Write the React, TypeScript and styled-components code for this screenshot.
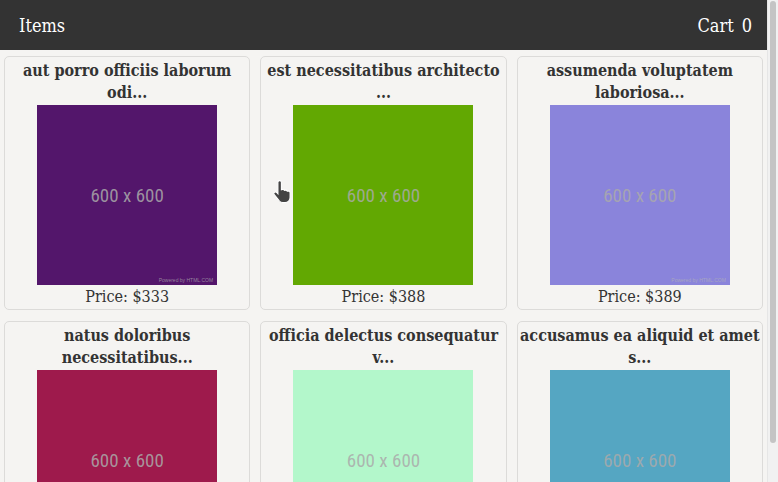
import React from "react";
import styled, { createGlobalStyle } from "styled-components";

const Global = createGlobalStyle`
  html { background: #f5f4f2; }
  body {
    margin: 0;
    padding-right: 11px;
    background: #f5f4f2;
    font-family: "DejaVu Serif", "Liberation Serif", serif;
    color: #333;
  }
`;

const Header = styled.header`
  height: 50px;
  background: #333333;
  color: #ffffff;
  display: flex;
  align-items: center;
  justify-content: space-between;
  padding: 0 15px 0 19px;
  font-size: 18px;
  font-stretch: semi-condensed;
  box-sizing: border-box;
`;

const CartCount = styled.span`
  margin-left: 8px;
`;

const Grid = styled.main`
  display: grid;
  grid-template-columns: repeat(3, 1fr);
  gap: 11px 10px;
  padding: 6px 4px 4px;
`;

const Card = styled.div`
  border: 1px solid #dcdbd9;
  border-radius: 5px;
  background: #f5f4f2;
  padding: 3px 2px 0;
  display: flex;
  flex-direction: column;
  align-items: center;
  text-align: center;
`;

const Title = styled.div`
  font-weight: bold;
  font-size: 16px;
  font-stretch: condensed;
  line-height: 22px;
  height: 44px;
  margin-bottom: 1px;
  color: #333;
`;

const Img = styled.div<{ $bg: string }>`
  position: relative;
  width: 180px;
  height: 180px;
  background: ${(p) => p.$bg};
  display: flex;
  align-items: center;
  justify-content: center;
  font-family: "Liberation Sans Narrow", "Roboto Condensed", "Liberation Sans", sans-serif;
  font-stretch: condensed;
  font-size: 19px;
  color: rgba(170, 170, 170, 0.85);
`;

const Powered = styled.span`
  position: absolute;
  right: 4px;
  bottom: 2px;
  font-family: "Liberation Sans", sans-serif;
  font-size: 5px;
  color: rgba(180, 180, 180, 0.7);
`;

const Price = styled.div`
  font-size: 16px;
  font-stretch: condensed;
  line-height: 24px;
  color: #333;
`;

const Cursor = styled.svg`
  position: absolute;
  left: 272px;
  top: 179px;
`;

const ScrollTrack = styled.div`
  position: fixed;
  top: 0;
  right: 0;
  width: 11px;
  height: 100vh;
  background: #f1f1f1;
  border-left: 1px solid #e6e6e6;
  box-sizing: border-box;
  padding: 1px 2px 0 2px;
`;

const ScrollThumb = styled.div`
  height: 442px;
  background: #c4c4c4;
  border-radius: 3px;
`;

const items = [
  { t: "aut porro officiis laborum odi...", c: "#53166b", p: 333, pw: true },
  { t: "est necessitatibus architecto ...", c: "#62a802", p: 388, pw: false },
  { t: "assumenda voluptatem laboriosa...", c: "#8a84db", p: 389, pw: true },
  { t: "natus doloribus necessitatibus...", c: "#9e1a4c", p: 301, pw: false },
  { t: "officia delectus consequatur v...", c: "#b3f7cb", p: 402, pw: false },
  { t: "accusamus ea aliquid et amet s...", c: "#55a6c2", p: 215, pw: false },
];

export default function App() {
  return (
    <>
      <Global />
      <Header>
        <span>Items</span>
        <span>
          Cart<CartCount>0</CartCount>
        </span>
      </Header>
      <Grid>
        {items.map((it, i) => (
          <Card key={i}>
            <Title>{it.t}</Title>
            <Img $bg={it.c}>
              600 x 600
              {it.pw && <Powered>Powered by HTML.COM</Powered>}
            </Img>
            <Price>Price: ${it.p}</Price>
          </Card>
        ))}
      </Grid>
      <Cursor width="24" height="26" viewBox="0 0 22 24">
        <path
          d="M7 1.5c1 0 1.6.7 1.6 1.6V10l1-.3c.8-.2 1.5.2 1.8.8l.9-.2c.8-.1 1.4.3 1.7.9l.8-.1c1 0 1.8.7 1.8 1.7V17c0 2.6-2 4.8-4.6 4.8H10c-1.6 0-2.8-.8-3.7-2L2 14.5c-.6-.7-.5-1.6.2-2.1.7-.5 1.6-.4 2.2.2l1 1.1V3.1C5.4 2.2 6 1.5 7 1.5z"
          fill="#444"
          stroke="#fff"
          strokeWidth="1"
        />
      </Cursor>
      <ScrollTrack>
        <ScrollThumb />
      </ScrollTrack>
    </>
  );
}
